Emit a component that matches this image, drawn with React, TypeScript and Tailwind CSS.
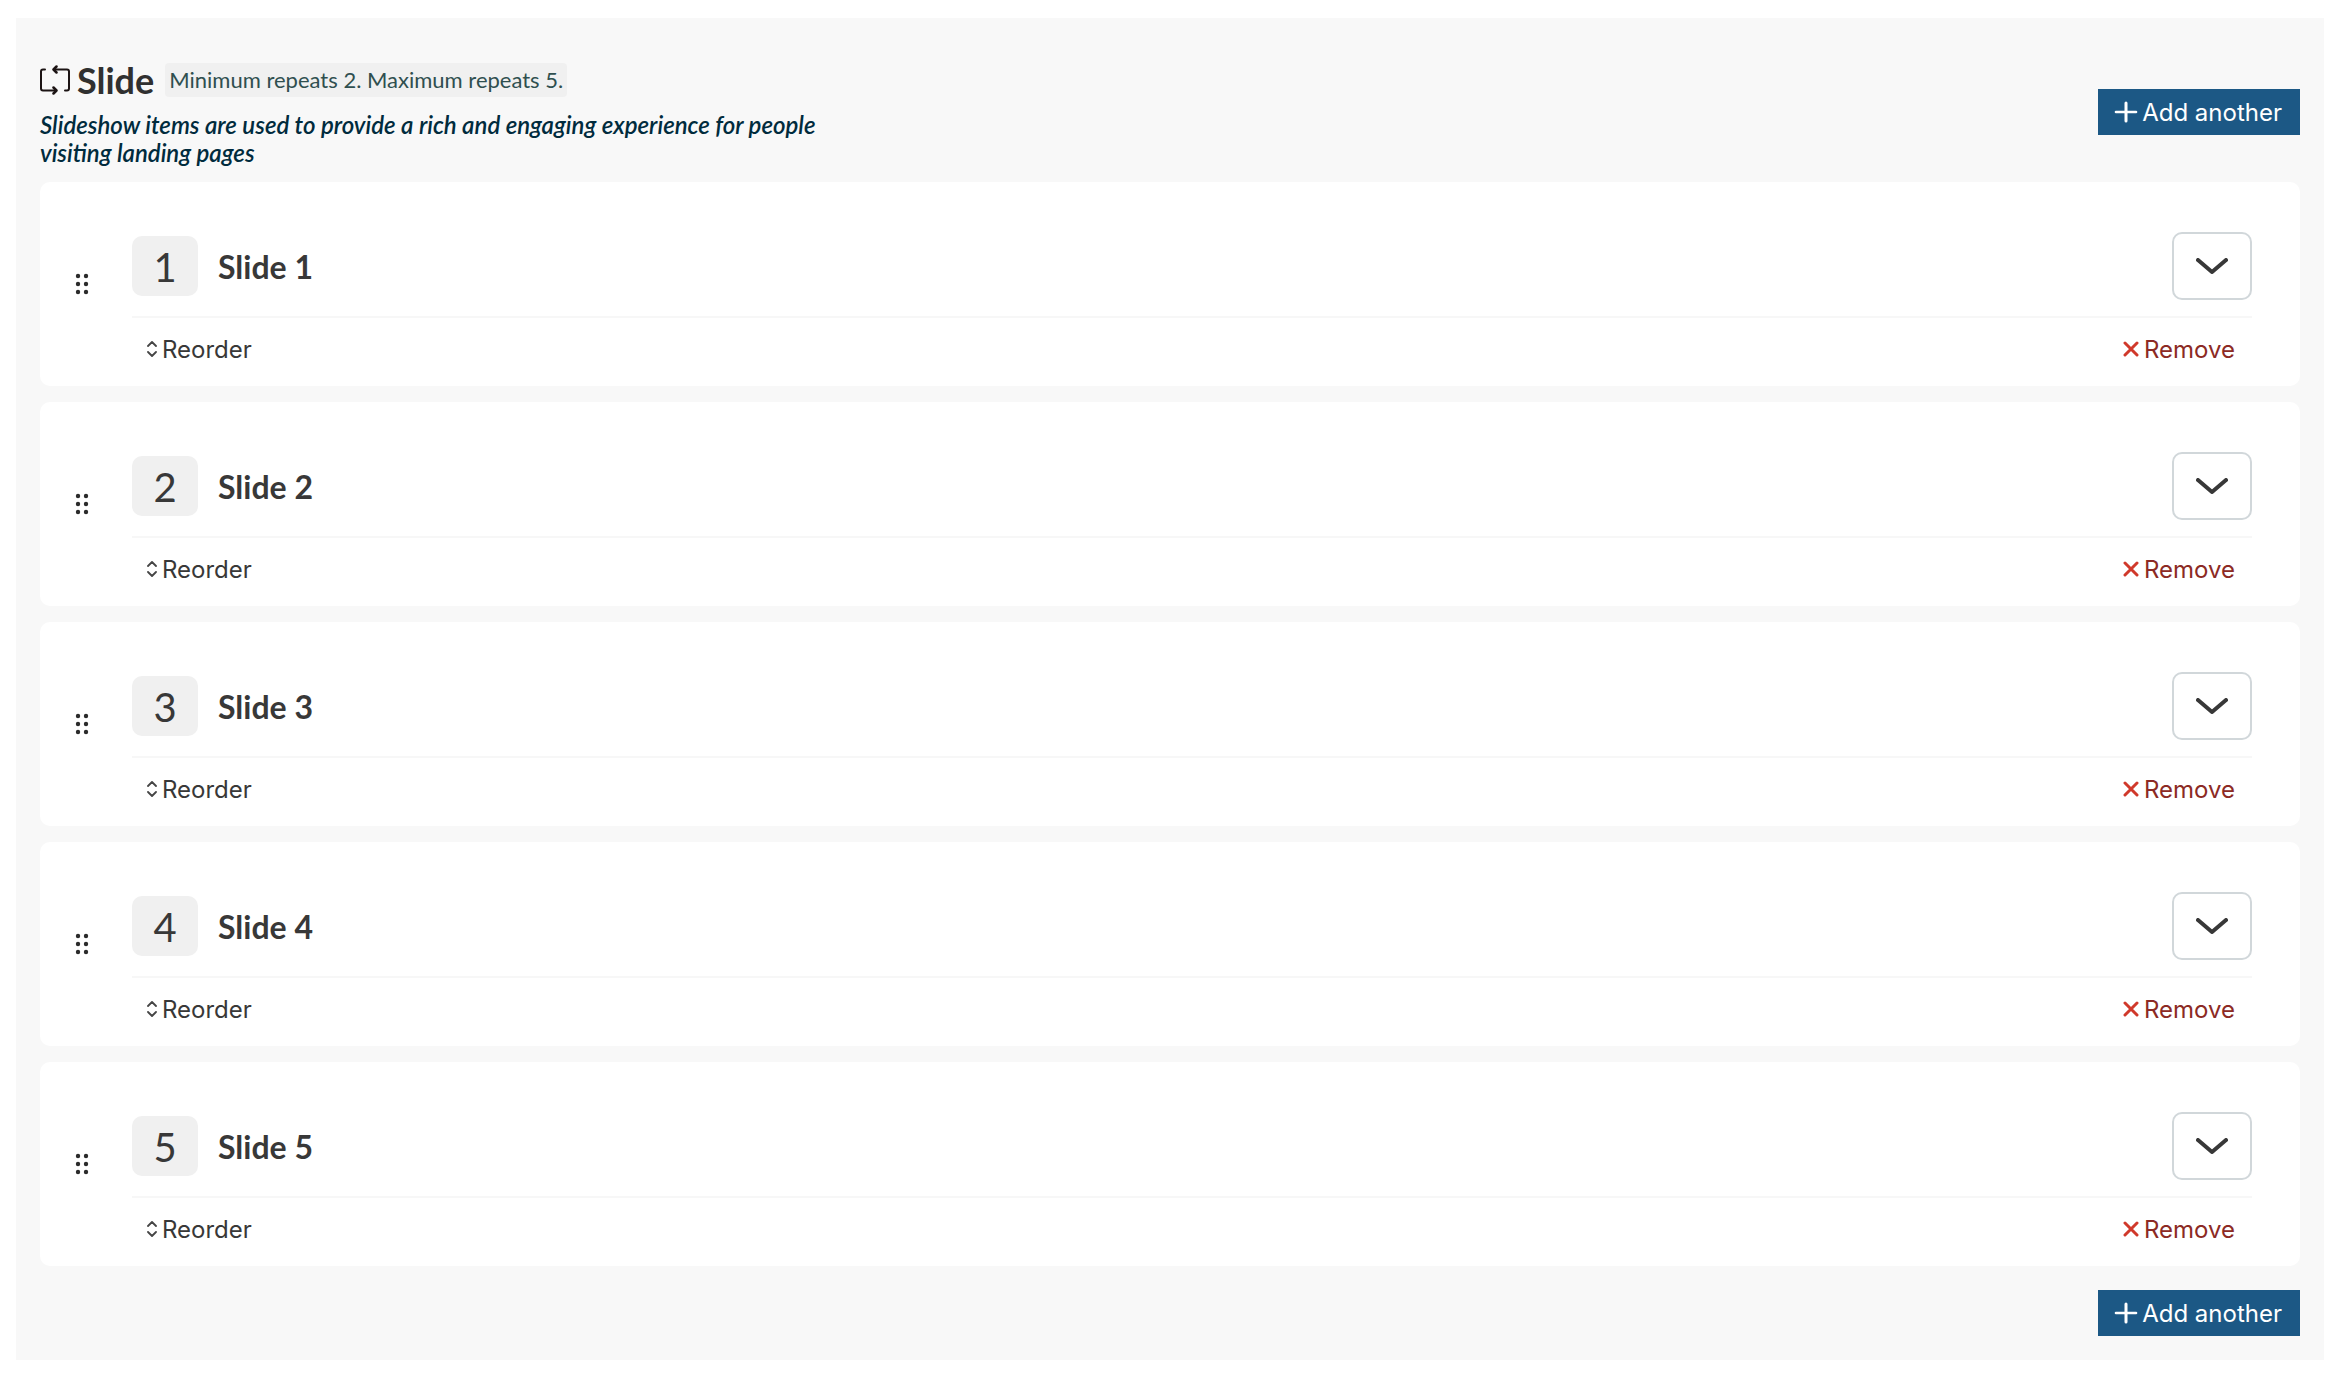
import React from "react";

const slides = [1, 2, 3, 4, 5];

function RepeatIcon() {
  return (
    <svg viewBox="0 0 30 30" className="size-[30px] shrink-0" fill="none" stroke="#1c1414" strokeWidth="2" strokeLinecap="round" strokeLinejoin="round" aria-hidden="true">
      <path d="M5 4.500H3Q1 4.500 1 6.500V23.500Q1 25.500 3 25.500H16" />
      <path d="M25 25.500H27Q29 25.500 29 23.500V6.500Q29 4.500 27 4.500H14" />
      <path d="M13.500 22.500L16.500 25.500L13.500 28.500" strokeWidth="2.500" />
      <path d="M16.500 1.500L13.500 4.500L16.500 7.500" strokeWidth="2.500" />
    </svg>
  );
}

function DragIcon() {
  return (
    <svg viewBox="0 0 14 22" className="h-[22px] w-[14px]" fill="#2b2b2b" aria-hidden="true">
      {[3, 11, 19].map((y) => (
        <React.Fragment key={y}>
          <circle cx="3" cy={y} r="2.200" />
          <circle cx="11" cy={y} r="2.200" />
        </React.Fragment>
      ))}
    </svg>
  );
}

function AddButton() {
  return (
    <button type="button" className="flex h-[46px] shrink-0 items-center gap-1 bg-[#1c5885] pr-[18px] pl-4 text-2xl text-white">
      <svg viewBox="0 0 24 22" className="h-[22px] w-6" stroke="currentColor" strokeLinecap="round" aria-hidden="true">
        <path d="M2 11H22" strokeWidth="2.600" />
        <path d="M12 2V20" strokeWidth="3" />
      </svg>
      <span className="pt-0.5">Add another</span>
    </button>
  );
}

function SlideCard({ n }: { n: number }) {
  return (
    <li className="flex items-center rounded-[10px] bg-white pr-12">
      <div className="flex w-[92px] shrink-0 justify-center pr-2">
        <button type="button" aria-label={`Drag slide ${n}`} className="cursor-grab">
          <DragIcon />
        </button>
      </div>
      <div className="min-w-0 grow pt-[50px] pb-2">
        <div className="flex items-center justify-between border-b-2 border-[#f7f7f7] pb-4">
          <div className="flex items-center gap-5">
            <span className="flex h-[60px] w-[66px] items-center justify-center rounded-[10px] bg-[#f0f0f0] pt-0.5 font-['Lato',sans-serif] text-[40px] leading-none">{n}</span>
            <h3 className="pt-0.5 font-['Lato',sans-serif] text-[32px] leading-10 font-bold">Slide {n}</h3>
          </div>
          <button type="button" aria-label={`Expand slide ${n}`} aria-expanded="false" className="flex h-[68px] w-20 items-center justify-center rounded-[10px] border-2 border-[#d1d7da]">
            <svg viewBox="0 0 32 16" className="h-4 w-8" fill="none" stroke="#383838" strokeWidth="4" strokeLinecap="round" strokeLinejoin="round" aria-hidden="true">
              <path d="M2 2L16 14L30 2" />
            </svg>
          </button>
        </div>
        <div className="flex h-[60px] items-center justify-between pr-[17px] pl-[15px] pt-0.5 text-2xl">
          <button type="button" className="flex items-center gap-[5px]">
            <svg viewBox="0 0 10 16" className="h-4 w-2.5" fill="none" stroke="#454545" strokeWidth="1.800" strokeLinecap="round" strokeLinejoin="round" aria-hidden="true">
              <path d="M1 5L5 1L9 5M1 11L5 15L9 11" />
            </svg>
            <span className="pt-0.5">Reorder</span>
          </button>
          <button type="button" className="flex items-center gap-[5px] text-[#8c2a24]">
            <svg viewBox="0 0 16 16" className="size-4" stroke="#d0392b" strokeWidth="3" strokeLinecap="round" aria-hidden="true">
              <path d="M2 2L14 14M14 2L2 14" />
            </svg>
            <span className="pt-0.5">Remove</span>
          </button>
        </div>
      </div>
    </li>
  );
}

export default function App() {
  return (
    <main className="bg-white pt-[18px] pr-[18px] pb-3.5 pl-4 font-['Inter',sans-serif] text-[#383838] antialiased [text-rendering:optimizeLegibility]">
      <section className="bg-[#f8f8f8] p-6">
        <header className="flex items-center justify-between">
          <div className="max-w-[800px] pt-[18px] pb-[15px] font-['Lato',sans-serif]">
            <div className="flex items-center">
              <RepeatIcon />
              <h2 className="ml-[7px] text-[36px] leading-10 font-bold text-[#303030]">Slide</h2>
              <span className="ml-[11px] rounded-sm bg-[#f0f0f0] px-1 text-[22px] leading-[34px] text-[#2f4f4f]">Minimum repeats 2. Maximum repeats 5.</span>
            </div>
            <p className="mt-[11px] text-2xl leading-7 font-semibold text-[#002b3d] italic">Slideshow items are used to provide a rich and engaging experience for people visiting landing pages</p>
          </div>
          <AddButton />
        </header>
        <ul className="flex flex-col gap-4">
          {slides.map((n) => (
            <SlideCard key={n} n={n} />
          ))}
        </ul>
        <footer className="mt-6 flex justify-end">
          <AddButton />
        </footer>
      </section>
    </main>
  );
}
